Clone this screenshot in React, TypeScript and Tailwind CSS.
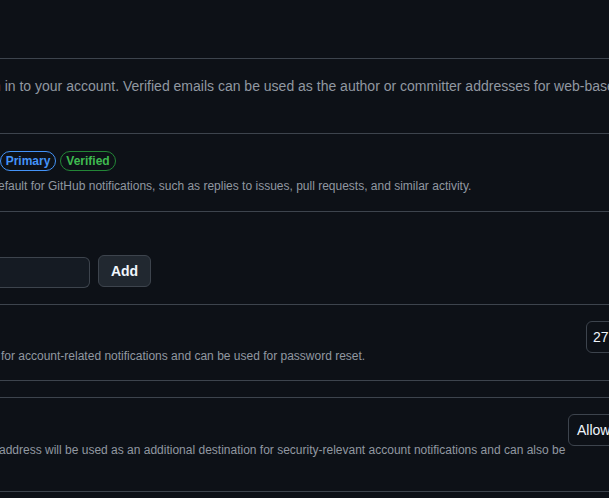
import React from "react";

export default function App() {
  const line = "h-px bg-[#3d444d] w-full shrink-0";
  return (
    <div className="w-[609px] h-[498px] bg-[#0d1117] overflow-hidden flex flex-col font-['Liberation_Sans',Arial,sans-serif]">
      <div className="h-[58px] shrink-0" />
      <div className={line} />
      {/* section A */}
      <div className="h-[74px] shrink-0 pt-[17px] overflow-hidden">
        <p className="ml-[-7px] whitespace-nowrap text-[14px] leading-[21px] text-[#9198a1]">
          n in to your account. Verified emails can be used as the author or committer addresses for web-based Git operations, e.g. edits and merges.
        </p>
      </div>
      <div className={line} />
      {/* section B */}
      <div className="h-[77px] shrink-0 pt-[17px] overflow-hidden">
        <div className="flex gap-[4px]">
          <span className="h-[20px] w-[56px] flex items-center justify-center rounded-full border border-[#4493f8] text-[12px] font-bold text-[#4493f8]">
            Primary
          </span>
          <span className="h-[20px] w-[56px] flex items-center justify-center rounded-full border border-[#238636] text-[12px] font-bold text-[#3fb950]">
            Verified
          </span>
        </div>
        <p className="mt-[6px] ml-[-2px] whitespace-nowrap text-[12px] leading-[18px] text-[#9198a1]">
          efault for GitHub notifications, such as replies to issues, pull requests, and similar activity.
        </p>
      </div>
      <div className={line} />
      {/* section C */}
      <div className="h-[92px] shrink-0 pt-[43px] overflow-hidden">
        <div className="flex items-start gap-[8px]">
          <div className="mt-[2px] h-[31px] w-[91px] ml-[-1px] rounded-r-[6px] border border-l-0 border-[#3d444d] bg-[#151b23]" />
          <button className="h-[32px] w-[53px] rounded-[6px] border border-[#3d444d] bg-[#212830] text-[14px] font-bold text-[#f0f6fc]">
            Add
          </button>
        </div>
      </div>
      <div className={line} />
      {/* section D */}
      <div className="h-[75px] shrink-0 flex justify-between overflow-hidden">
        <div className="pt-[42px]">
          <p className="ml-[1px] whitespace-nowrap text-[12px] leading-[18px] text-[#9198a1]">
            for account-related notifications and can be used for password reset.
          </p>
        </div>
        <div className="pt-[16px] shrink-0 w-[23px]">
          <div className="h-[32px] w-[200px] rounded-[6px] border border-[#3d444d] bg-[#0d1117] flex items-center pl-[6px] text-[14px] text-[#f0f6fc] whitespace-nowrap">
            27
          </div>
        </div>
      </div>
      <div className={line} />
      <div className="h-[16px] shrink-0" />
      <div className={line} />
      {/* section E */}
      <div className="h-[93px] shrink-0 flex justify-between overflow-hidden">
        <div className="pt-[43px]">
          <p className="ml-[-1px] whitespace-nowrap text-[12px] leading-[18px] text-[#9198a1]">
            address will be used as an additional destination for security-relevant account notifications and can also be
          </p>
        </div>
        <div className="pt-[16px] shrink-0 w-[41px]">
          <div className="h-[32px] w-[200px] rounded-[6px] border border-[#3d444d] bg-[#0d1117] flex items-center pl-[8px] text-[14px] text-[#f0f6fc] whitespace-nowrap">
            Allow
          </div>
        </div>
      </div>
      <div className={line} />
    </div>
  );
}
